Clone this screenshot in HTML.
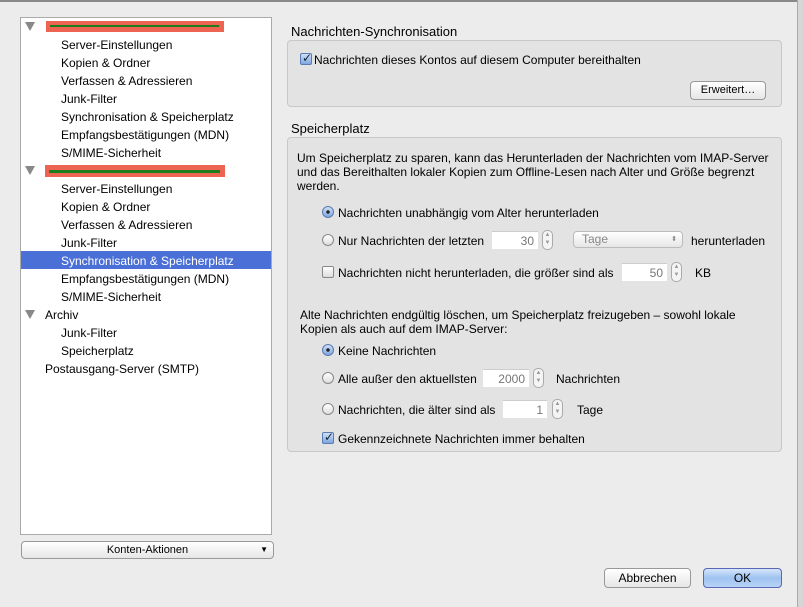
<!DOCTYPE html>
<html><head><meta charset="utf-8"><style>
body{margin:0;width:803px;height:607px;background:#ececec;position:relative;overflow:hidden;font-family:"Liberation Sans",sans-serif;font-size:12px;color:#000}
.a{position:absolute;white-space:nowrap;line-height:14px;margin-top:1px}
.box{position:absolute;background:#e3e3e3;border:1px solid #c8c8c8;border-radius:4px}
.inp{position:absolute;background:#fff;border-top:1px solid #ccc;height:18px;text-align:right;line-height:18px;color:#777;box-sizing:border-box;padding-right:4px}
.st{position:absolute;width:11px;height:20px;border:1px solid #aaa;border-radius:5px;background:#f4f4f4;box-sizing:border-box;font-size:6px;color:#999;text-align:center;line-height:8px}
.rad{position:absolute;width:12px;height:12px;border:1px solid #888;border-radius:50%;background:linear-gradient(#fff,#ddd);box-sizing:border-box}
.rad.on{background:radial-gradient(circle,#222 0 1.5px,transparent 2px),linear-gradient(#cfe0f7,#7fa6e0);border-color:#5a7bb0}
.cb{position:absolute;width:12px;height:12px;border:1px solid #888;border-radius:2px;background:linear-gradient(#fff,#ddd);box-sizing:border-box}
.cb.on{background:linear-gradient(#cfe0f7,#7fa6e0);border-color:#5a7bb0}
.btn{position:absolute;border:1px solid #999;border-radius:4px;background:linear-gradient(#fff,#e6e6e6);text-align:center;box-sizing:border-box}
.tri{position:absolute;width:0;height:0;border-left:5px solid transparent;border-right:5px solid transparent;border-top:9px solid #888}
</style></head><body>
<div style="position:absolute;left:0;top:0;width:803px;height:2px;background:#888"></div>
<div style="position:absolute;left:797px;top:0;width:6px;height:607px;background:#d6d6d6;border-left:1px solid #aaa"></div>

<div style="position:absolute;left:20px;top:17px;width:252px;height:518px;background:#fff;border:1px solid #aaa;box-sizing:border-box"></div>
<div class="tri" style="left:25px;top:22px"></div>
<div style="position:absolute;left:46px;top:21px;width:178px;height:11px;background:#ee6452"></div>
<div style="position:absolute;left:50px;top:25px;width:169px;height:2px;background:#1d7d1d"></div>
<div class="tri" style="left:25px;top:166px"></div>
<div style="position:absolute;left:45px;top:165px;width:180px;height:12px;background:#ee6452"></div>
<div style="position:absolute;left:49px;top:170px;width:171px;height:3px;background:#1d7d1d"></div>
<div style="position:absolute;left:21px;top:251px;width:250px;height:18px;background:#4a6fd6"></div>
<div class="a" style="left:61px;top:37px">Server-Einstellungen</div>
<div class="a" style="left:61px;top:55px">Kopien &amp; Ordner</div>
<div class="a" style="left:61px;top:73px">Verfassen &amp; Adressieren</div>
<div class="a" style="left:61px;top:91px">Junk-Filter</div>
<div class="a" style="left:61px;top:109px">Synchronisation &amp; Speicherplatz</div>
<div class="a" style="left:61px;top:127px">Empfangsbestätigungen (MDN)</div>
<div class="a" style="left:61px;top:145px">S/MIME-Sicherheit</div>
<div class="a" style="left:61px;top:181px">Server-Einstellungen</div>
<div class="a" style="left:61px;top:199px">Kopien &amp; Ordner</div>
<div class="a" style="left:61px;top:217px">Verfassen &amp; Adressieren</div>
<div class="a" style="left:61px;top:235px">Junk-Filter</div>
<div class="a" style="left:61px;top:253px;color:#fff">Synchronisation &amp; Speicherplatz</div>
<div class="a" style="left:61px;top:271px">Empfangsbestätigungen (MDN)</div>
<div class="a" style="left:61px;top:289px">S/MIME-Sicherheit</div>
<div class="tri" style="left:25px;top:310px"></div>
<div class="a" style="left:45px;top:307px">Archiv</div>
<div class="a" style="left:61px;top:325px">Junk-Filter</div>
<div class="a" style="left:61px;top:343px">Speicherplatz</div>
<div class="a" style="left:45px;top:361px">Postausgang-Server (SMTP)</div>
<div class="btn" style="left:21px;top:541px;width:253px;height:18px;line-height:16px;font-size:11px">Konten-Aktionen<span style="position:absolute;right:5px;font-size:8px">▼</span></div>

<div class="a" style="left:291px;top:24px;font-size:13px">Nachrichten-Synchronisation</div>
<div class="box" style="left:287px;top:40px;width:495px;height:67px;box-sizing:border-box"></div>
<div class="cb on" style="left:300px;top:53px"></div>
<div class="a" style="left:302px;top:50px;font-size:12px;color:#123">✓</div>
<div class="a" style="left:314px;top:52px">Nachrichten dieses Kontos auf diesem Computer bereithalten</div>
<div class="btn" style="left:690px;top:81px;width:76px;height:19px;line-height:17px;font-size:11px">Erweitert…</div>

<div class="a" style="left:291px;top:121px;font-size:13px">Speicherplatz</div>
<div class="box" style="left:287px;top:137px;width:495px;height:315px;box-sizing:border-box"></div>
<div class="a" style="left:297px;top:150px">Um Speicherplatz zu sparen, kann das Herunterladen der Nachrichten vom IMAP-Server</div>
<div class="a" style="left:297px;top:164px">und das Bereithalten lokaler Kopien zum Offline-Lesen nach Alter und Größe begrenzt</div>
<div class="a" style="left:297px;top:178px">werden.</div>
<div class="rad on" style="left:322px;top:206px"></div>
<div class="a" style="left:338px;top:205px">Nachrichten unabhängig vom Alter herunterladen</div>
<div class="rad" style="left:322px;top:234px"></div>
<div class="a" style="left:338px;top:233px">Nur Nachrichten der letzten</div>
<div class="inp" style="left:492px;top:231px;width:46px">30</div>
<div class="st" style="left:542px;top:230px">▲<br>▼</div>
<div class="btn" style="left:573px;top:231px;width:110px;height:17px;line-height:15px;text-align:left;padding-left:8px;color:#888;border-color:#bbb">Tage<span style="position:absolute;right:5px;font-size:7px">⬍</span></div>
<div class="a" style="left:691px;top:233px">herunterladen</div>
<div class="cb" style="left:322px;top:266px"></div>
<div class="a" style="left:338px;top:265px">Nachrichten nicht herunterladen, die größer sind als</div>
<div class="inp" style="left:622px;top:263px;width:45px">50</div>
<div class="st" style="left:671px;top:262px">▲<br>▼</div>
<div class="a" style="left:695px;top:265px">KB</div>
<div class="a" style="left:300px;top:307px">Alte Nachrichten endgültig löschen, um Speicherplatz freizugeben – sowohl lokale</div>
<div class="a" style="left:300px;top:321px">Kopien als auch auf dem IMAP-Server:</div>
<div class="rad on" style="left:322px;top:344px"></div>
<div class="a" style="left:338px;top:343px">Keine Nachrichten</div>
<div class="rad" style="left:322px;top:372px"></div>
<div class="a" style="left:338px;top:371px">Alle außer den aktuellsten</div>
<div class="inp" style="left:483px;top:369px;width:46px">2000</div>
<div class="st" style="left:533px;top:368px">▲<br>▼</div>
<div class="a" style="left:556px;top:371px">Nachrichten</div>
<div class="rad" style="left:322px;top:403px"></div>
<div class="a" style="left:338px;top:402px">Nachrichten, die älter sind als</div>
<div class="inp" style="left:503px;top:400px;width:44px">1</div>
<div class="st" style="left:552px;top:399px">▲<br>▼</div>
<div class="a" style="left:577px;top:402px">Tage</div>
<div class="cb on" style="left:322px;top:432px"></div>
<div class="a" style="left:324px;top:429px;color:#123">✓</div>
<div class="a" style="left:338px;top:431px">Gekennzeichnete Nachrichten immer behalten</div>

<div class="btn" style="left:604px;top:568px;width:87px;height:20px;line-height:18px">Abbrechen</div>
<div class="btn" style="left:703px;top:568px;width:79px;height:20px;line-height:18px;border-color:#5a66b8;background:linear-gradient(#d6e6fb,#9fc2f0 50%,#b8d4f6)">OK</div>
</body></html>
